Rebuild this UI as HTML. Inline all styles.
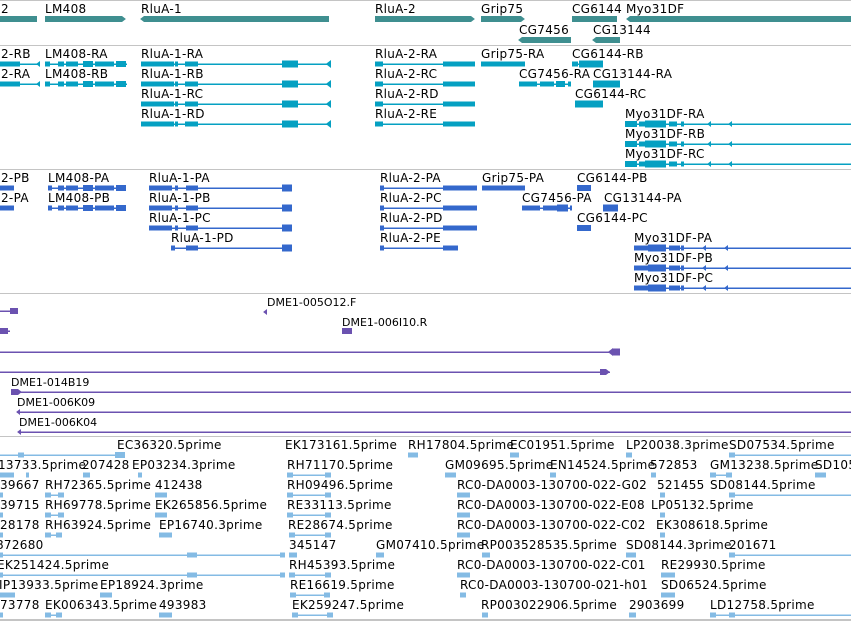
<!DOCTYPE html>
<html><head><meta charset="utf-8"><style>
html,body{margin:0;padding:0;background:#fff;width:851px;height:621px;overflow:hidden}
svg{display:block}
text{font-family:"DejaVu Sans","Liberation Sans",sans-serif;font-size:12px;fill:#000;letter-spacing:0.3px}
.s{font-size:11px;letter-spacing:0}
</style></head><body>
<svg id="sv" width="851" height="621" xmlns="http://www.w3.org/2000/svg">
<g fill="#c4c4c4">
<rect x="0" y="0" width="851" height="1"/><rect x="0" y="45" width="851" height="1"/>
<rect x="0" y="169" width="851" height="1"/><rect x="0" y="293" width="851" height="1"/>
<rect x="0" y="436" width="851" height="1"/><rect x="0" y="619" width="851" height="2"/>
</g>
<g id="shapes"></g>
<text x="1" y="13">2</text><text x="45" y="13">LM408</text><text x="141" y="13">RluA-1</text>
<text x="375" y="13">RluA-2</text><text x="481" y="13">Grip75</text><text x="572" y="13">CG6144</text>
<text x="626" y="13">Myo31DF</text>
<text x="519" y="34">CG7456</text><text x="593" y="34">CG13144</text>
<text x="1" y="58">2-RB</text><text x="45" y="58">LM408-RA</text><text x="141" y="58">RluA-1-RA</text><text x="375" y="58">RluA-2-RA</text><text x="481" y="58">Grip75-RA</text><text x="572" y="58">CG6144-RB</text>
<text x="1" y="78">2-RA</text><text x="45" y="78">LM408-RB</text><text x="141" y="78">RluA-1-RB</text><text x="375" y="78">RluA-2-RC</text><text x="519" y="78">CG7456-RA</text><text x="593" y="78">CG13144-RA</text>
<text x="141" y="98">RluA-1-RC</text><text x="375" y="98">RluA-2-RD</text><text x="575" y="98">CG6144-RC</text>
<text x="141" y="118">RluA-1-RD</text><text x="375" y="118">RluA-2-RE</text><text x="625" y="118">Myo31DF-RA</text>
<text x="625" y="138">Myo31DF-RB</text><text x="625" y="158">Myo31DF-RC</text>
<text x="1" y="182">2-PB</text><text x="48" y="182">LM408-PA</text><text x="149" y="182">RluA-1-PA</text><text x="380" y="182">RluA-2-PA</text><text x="482" y="182">Grip75-PA</text><text x="577" y="182">CG6144-PB</text>
<text x="1" y="202">2-PA</text><text x="48" y="202">LM408-PB</text><text x="149" y="202">RluA-1-PB</text><text x="380" y="202">RluA-2-PC</text><text x="522" y="202">CG7456-PA</text><text x="604" y="202">CG13144-PA</text>
<text x="149" y="222">RluA-1-PC</text><text x="380" y="222">RluA-2-PD</text><text x="577" y="222">CG6144-PC</text>
<text x="171" y="242">RluA-1-PD</text><text x="380" y="242">RluA-2-PE</text><text x="634" y="242">Myo31DF-PA</text>
<text x="634" y="262">Myo31DF-PB</text><text x="634" y="282">Myo31DF-PC</text>
<text class="s" x="267" y="306">DME1-005O12.F</text>
<text class="s" x="342" y="326">DME1-006I10.R</text>
<text class="s" x="11" y="386">DME1-014B19</text>
<text class="s" x="17" y="406">DME1-006K09</text>
<text class="s" x="19" y="426">DME1-006K04</text>
<text x="117" y="449">EC36320.5prime</text><text x="285" y="449">EK173161.5prime</text><text x="408" y="449">RH17804.5prime</text><text x="510" y="449">EC01951.5prime</text><text x="626" y="449">LP20038.3prime</text><text x="729" y="449">SD07534.5prime</text>
<text x="-2" y="469">13733.5prime</text><text x="82" y="469">207428</text><text x="132" y="469">EP03234.3prime</text><text x="287" y="469">RH71170.5prime</text><text x="445" y="469">GM09695.5prime</text><text x="550" y="469">EN14524.5prime</text><text x="650" y="469">572853</text><text x="710" y="469">GM13238.5prime</text><text x="815" y="469">SD105</text>
<text x="0" y="489">39667</text><text x="45" y="489">RH72365.5prime</text><text x="155" y="489">412438</text><text x="287" y="489">RH09496.5prime</text><text x="457" y="489">RC0-DA0003-130700-022-G02</text><text x="657" y="489">521455</text><text x="710" y="489">SD08144.5prime</text>
<text x="0" y="509">39715</text><text x="45" y="509">RH69778.5prime</text><text x="155" y="509">EK265856.5prime</text><text x="287" y="509">RE33113.5prime</text><text x="457" y="509">RC0-DA0003-130700-022-E08</text><text x="651" y="509">LP05132.5prime</text>
<text x="0" y="529">28178</text><text x="45" y="529">RH63924.5prime</text><text x="159" y="529">EP16740.3prime</text><text x="288" y="529">RE28674.5prime</text><text x="457" y="529">RC0-DA0003-130700-022-C02</text><text x="656" y="529">EK308618.5prime</text>
<text x="-4" y="549">872680</text><text x="289" y="549">345147</text><text x="376" y="549">GM07410.5prime</text><text x="481" y="549">RP003528535.5prime</text><text x="626" y="549">SD08144.3prime</text><text x="729" y="549">201671</text>
<text x="-3" y="569">EK251424.5prime</text><text x="289" y="569">RH45393.5prime</text><text x="457" y="569">RC0-DA0003-130700-022-C01</text><text x="661" y="569">RE29930.5prime</text>
<text x="-1" y="589">IP13933.5prime</text><text x="100" y="589">EP18924.3prime</text><text x="290" y="589">RE16619.5prime</text><text x="460" y="589">RC0-DA0003-130700-021-h01</text><text x="661" y="589">SD06524.5prime</text>
<text x="0" y="609">73778</text><text x="45" y="609">EK006343.5prime</text><text x="159" y="609">493983</text><text x="292" y="609">EK259247.5prime</text><text x="481" y="609">RP003022906.5prime</text><text x="629" y="609">2903699</text><text x="710" y="609">LD12758.5prime</text>
</svg>
<script>
var g=document.getElementById('shapes'),h='';
function r(c,x,y,w,hh){h+='<rect fill="'+c+'" x="'+x+'" y="'+y+'" width="'+w+'" height="'+hh+'"/>';}
function f(c,y,x1,x2,bl){if(x2>x1)r(c,x1,y-0.5,x2-x1,1.5);(bl||[]).forEach(function(b){r(c,b[0],y-b[2]/2,b[1]-b[0],b[2]);});}
function ar(c,x,y,dir,s){s=s||4;h+='<polygon fill="'+c+'" points="'+x+','+(y-s)+' '+x+','+(y+s)+' '+(x+dir*s*1.3)+','+y+'"/>';}
var T='#3f8f90';
r(T,0,16,37,6);r(T,45,16,77,6);ar(T,122,19,1,3);r(T,144,16,185,6);ar(T,144,19,-1,3);
r(T,375,16,96,6);ar(T,471,19,1,3);r(T,481,16,40,6);ar(T,521,19,1,3);r(T,572,16,45,6);
r(T,630,16,221,6);ar(T,630,19,-1,3);r(T,522,37,49,6);ar(T,522,40,-1,3);r(T,596,37,24,6);ar(T,596,40,-1,3);
var C='#05a0c2';
[64,84].forEach(function(y,i){f(C,y,0,40,[[0,20,5]]);ar(C,40,y,-1,3);f(C,y,45,127,[[45,50,5],[58,64,5],[66,78,5],[83,93,6],[95,114,5],[116,126,6]]);});
[64,84,104,124].forEach(function(y,i){f(C,y,141,331,[[141,174,5],[175,178,5],[185,198,5],[282,298,7]]);ar(C,331,y,-1,4);
f(C,y,375,475,[[375,383,5],[443,475,5]]);});
f(C,64,481,525,[[481,525,5]]);f(C,64,572,603,[[572,578,5],[579,603,7]]);
f(C,84,519,571,[[519,537,5],[540,554,5],[556,565,6],[568,571,5]]);f(C,84,593,620,[[593,620,7]]);
f(C,104,575,603,[[575,603,7]]);
[124,144,164].forEach(function(y){f(C,y,625,851,[[625,637,6],[639,645,5],[645,666,7],[669,677,5],[681,684,5]]);ar(C,711,y,-1,3);ar(C,732,y,-1,3);});
var B='#3468cc';
[188,208].forEach(function(y){f(B,y,0,14,[[0,14,5]]);f(B,y,48,126,[[48,52,5],[58,64,5],[66,78,5],[83,93,6],[95,114,5],[116,126,6]]);});
[188,208,228].forEach(function(y){f(B,y,149,292,[[149,172,5],[175,178,5],[186,198,5],[282,292,7]]);});
f(B,248,171,292,[[171,175,5],[186,198,5],[282,292,7]]);
[188,208,228].forEach(function(y){f(B,y,380,477,[[380,384,5],[443,477,5]]);});f(B,248,380,458,[[380,384,5],[443,458,5]]);
f(B,188,482,525,[[482,525,5]]);f(B,188,577,591,[[577,591,6]]);f(B,228,577,591,[[577,591,6]]);
f(B,208,522,572,[[522,540,5],[543,557,5],[557,568,7],[570,572,5]]);f(B,208,603,618,[[603,618,7]]);
[248,268,288].forEach(function(y){f(B,y,634,851,[[634,648,5],[648,666,7],[669,680,5],[681,684,5]]);ar(B,706,y,-1,3);ar(B,728,y,-1,3);});
var P='#6b52b0';
f(P,311,0,18,[[10,18,6]]);ar(P,267,312,-1,3);f(P,331,0,10,[[0,8,6]]);r(P,342,328,10,6);
f(P,352,0,620,[[613,620,7]]);ar(P,613,352,-1,4);f(P,372,0,610,[[600,606,6]]);ar(P,606,372,1,3);
f(P,392,11,851,[[11,18,6]]);ar(P,18,392,1,3);f(P,412,17,851,[]);ar(P,20,412,-1,3);f(P,432,19,851,[]);ar(P,21,432,-1,3);
var L='#84bbe4';
function b5(y,a,b,ln){f(L,y,a,ln?b:a,ln?[[a,a+6,5],[b-6,b,5]]:[[a,b,5]]);}
f(L,455,0,125,[[18,24,5],[115,125,6]]);b5(455,408,418);b5(455,510,519);b5(455,626,632);f(L,455,729,851,[[729,735,5]]);
f(L,475,0,14,[[0,14,5]]);b5(475,83,90);b5(475,138,142);b5(475,287,331,1);b5(475,26,29);b5(475,445,456);b5(475,550,556);b5(475,651,656);b5(475,710,732,1);b5(475,815,826);
[495,515].forEach(function(y){b5(y,45,64,1);b5(y,155,167);b5(y,287,331,1);b5(y,457,470);b5(y,660,665);});f(L,495,729,851,[[729,735,5]]);
b5(535,45,62,1);b5(535,159,172);b5(535,289,331,1);b5(535,457,470);b5(535,660,665);
[555,575].forEach(function(y){f(L,y,0,285,[[187,197,5],[280,285,5]]);});
b5(555,289,297);b5(555,376,384);b5(555,482,490);b5(555,626,636);f(L,555,729,851,[[729,735,5]]);
b5(575,289,331,1);b5(575,457,470);b5(575,661,675);
b5(595,0,15);b5(595,100,112);b5(595,290,330,1);b5(595,460,466);b5(595,661,675);
b5(615,45,62,1);b5(615,159,172);b5(615,292,333,1);b5(615,482,488);b5(615,629,636);f(L,615,710,851,[[710,716,5],[729,735,5]]);
[495,515,535,555,575,595,615].forEach(function(y){b5(y,0,3);});
g.innerHTML=h;
</script>
</body></html>
